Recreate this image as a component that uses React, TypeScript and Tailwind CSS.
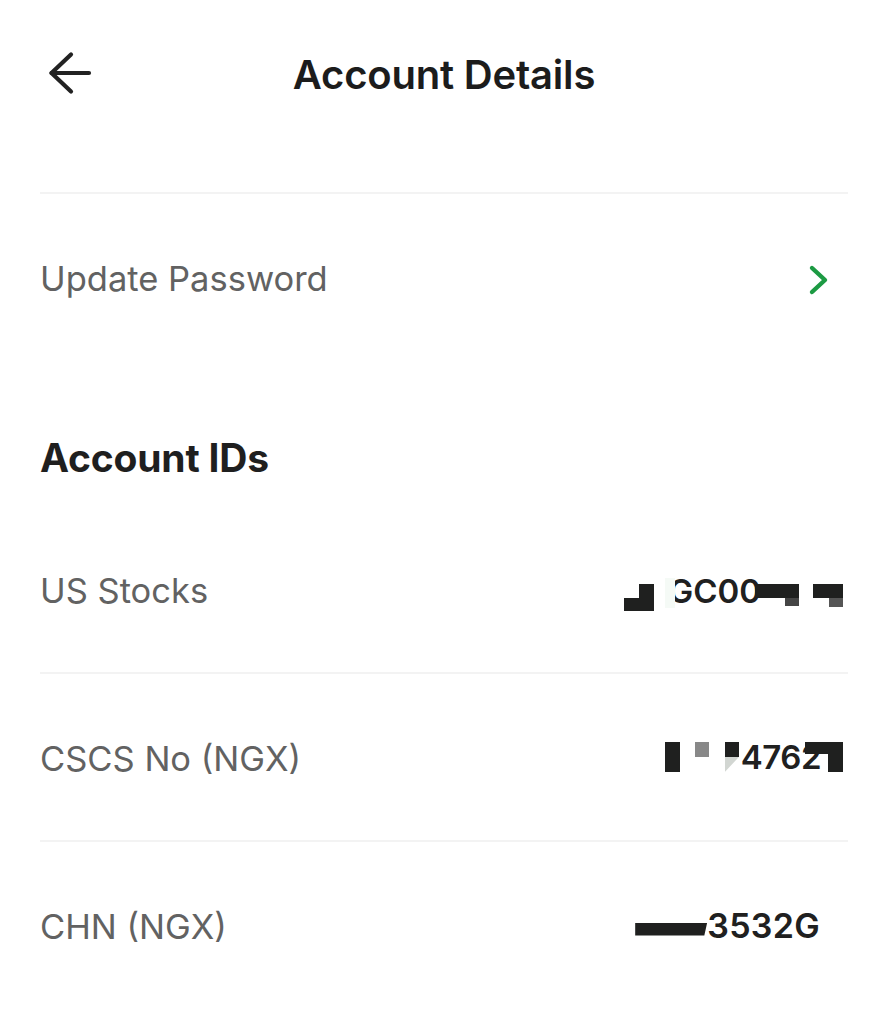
import type { ReactNode } from 'react'

const FONT = "font-['Inter','Noto_Sans',sans-serif]"

function BackArrow() {
  return (
    <svg width="44" height="44" viewBox="0 0 44 44" fill="none" stroke="#222222" strokeWidth="4.2" strokeLinecap="round" strokeLinejoin="round">
      <path d="M3.5 22H41" />
      <path d="M23 3.5L3.5 22L23 40.5" />
    </svg>
  )
}

function GreenChevron() {
  return (
    <svg width="24" height="32" viewBox="0 0 24 32" fill="none" stroke="#1c9a43" strokeWidth="4.4" strokeLinecap="round" strokeLinejoin="round">
      <path d="M5 4L18 16L5 28" />
    </svg>
  )
}

function Divider() {
  return <div className="h-[2px] bg-[#f3f3f3]" />
}

function Row({ label, children }: { label: string; children: ReactNode }) {
  return (
    <div className="h-[166px] flex items-center justify-between">
      <span className="text-[34.5px] leading-none text-[#626262] pt-[4px]">{label}</span>
      {children}
    </div>
  )
}

function Digits({ children, className = '' }: { children: ReactNode; className?: string }) {
  return (
    <span className={`h-[40px] flex items-center text-[33px] leading-none font-semibold text-[#202020] whitespace-nowrap ${className}`}>
      {children}
    </span>
  )
}

// masked values: redaction blocks sit in the same flex row as the digits and
// later blocks overlap the digits a little, like the painted-over screenshot
function UsStocksValue() {
  return (
    <div className="h-[40px] flex items-start mt-[4px] mr-[5px]">
      <div className="w-[15px] h-[13px] mt-[27px] bg-[#1f201f]" />
      <div className="w-[15px] h-[27px] mt-[13px] bg-[#1f201f]" />
      <div className="w-[14px]" />
      <Digits>GC00</Digits>
      <div className="w-[10px] h-[30px] mt-[7px] -ml-[96px] mr-[86px] bg-[#f5faf6]" />
      <div className="flex flex-col items-end mt-[13px] -ml-[6px]">
        <div className="w-[44px] h-[14px] bg-[#1f201f]" />
        <div className="w-[14px] h-[8px] bg-[#454545]" />
      </div>
      <div className="w-[14px]" />
      <div className="flex flex-col items-end mt-[13px]">
        <div className="w-[30px] h-[14px] bg-[#1f201f]" />
        <div className="w-[14px] h-[9px] bg-[#555555]" />
      </div>
    </div>
  )
}

function CscsValue() {
  return (
    <div className="h-[40px] flex items-start mr-[5px]">
      <div className="w-[15px] h-[30px] mt-[5px] bg-[#1f201f]" />
      <div className="w-[15px]" />
      <div className="w-[14px] h-[15px] mt-[5px] bg-[#888888]" />
      <div className="w-[16px]" />
      <div className="flex flex-col mt-[5px]">
        <div className="w-[14px] h-[15px] bg-[#1f201f]" />
        <div className="w-[14px] h-[15px] bg-[#d2d6d2] [clip-path:polygon(0_0,100%_0,0_100%)]" />
      </div>
      <Digits className="tracking-[-0.5px] pl-[2px]">4762</Digits>
      <div className="flex flex-col items-end mt-[5px] -ml-[16px]">
        <div className="w-[38px] h-[12px] bg-[#1f201f]" />
        <div className="w-[15px] h-[18px] bg-[#1f201f]" />
      </div>
    </div>
  )
}

function ChnValue() {
  return (
    <div className="h-[40px] flex items-center mr-[28px] mt-[2px]">
      <div className="w-[72px] h-[13px] mt-[6px] bg-[#1f201f] [clip-path:polygon(0_0,100%_0,96%_100%,0_100%)]" />
      <span className="text-[34px] leading-none font-semibold text-[#202020] tracking-[0.3px]">3532G</span>
    </div>
  )
}

export default function App() {
  return (
    <div className={`${FONT} w-[888px] h-[1024px] bg-white px-[40px] overflow-hidden`}>
      <header className="h-[150px] grid grid-cols-[1fr_auto_1fr] items-center">
        <div className="pl-[8px] pb-[4px]">
          <BackArrow />
        </div>
        <h1 className="text-[40px] leading-none font-semibold text-[#1c1c1c] tracking-[-0.2px]">Account Details</h1>
        <div />
      </header>

      <div className="h-[42px]" />
      <Divider />

      <Row label="Update Password">
        <div className="mr-[17px] mt-[6px]">
          <GreenChevron />
        </div>
      </Row>

      <h2 className="mt-[74px] text-[39px] leading-[48px] font-bold text-[#1f1f1f] tracking-[-0.2px]">Account IDs</h2>

      <div className="mt-[24px]">
        <Row label="US Stocks">
          <UsStocksValue />
        </Row>
        <Divider />
        <Row label="CSCS No (NGX)">
          <CscsValue />
        </Row>
        <Divider />
        <Row label="CHN (NGX)">
          <ChnValue />
        </Row>
      </div>
    </div>
  )
}
